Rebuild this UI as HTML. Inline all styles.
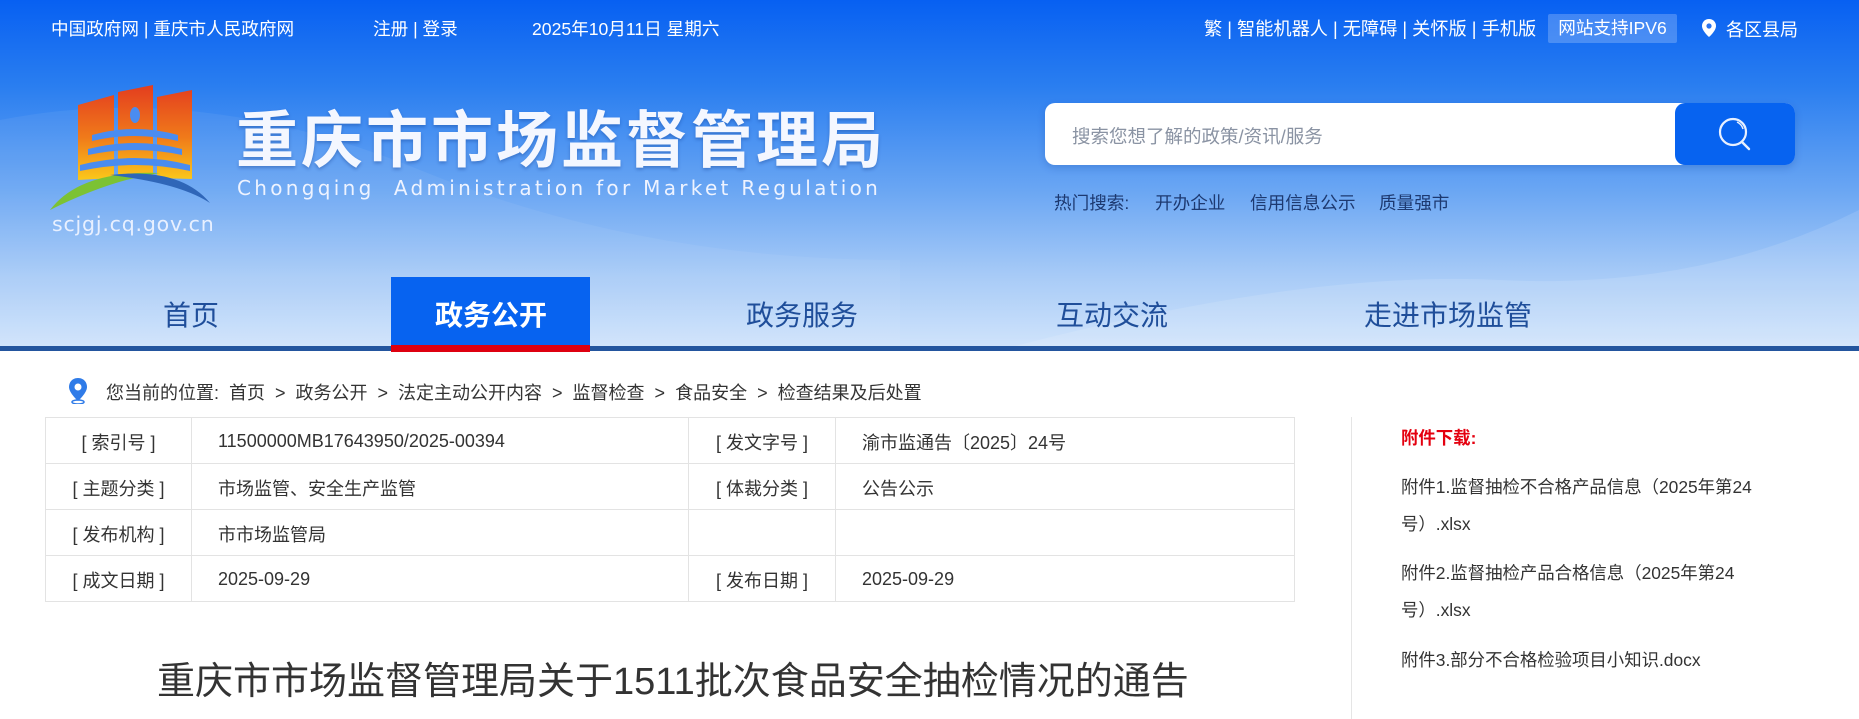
<!DOCTYPE html>
<html><head><meta charset="utf-8"><style>
*{margin:0;padding:0;box-sizing:border-box}
body{width:1859px;height:719px;overflow:hidden;background:#fff;font-family:"Liberation Sans","Noto Sans CJK SC",sans-serif;position:relative}
.hd{position:absolute;left:0;top:0;width:1859px;height:346px;background:linear-gradient(180deg,#0760f2 0%,#2a7ef0 25%,#6aa6f3 55%,#a8cbf7 80%,#cfe3fb 100%);overflow:hidden}
.a{position:absolute;white-space:nowrap}
.top{color:#fff;font-size:17.6px;top:16px}
.nav{font-size:28px;color:#1f4e9a;top:294px}
.tbl{position:absolute;left:45px;top:417px;width:1250px;border-collapse:collapse;font-size:18px;color:#333}
.tbl td{border:1px solid #e3e3e3;height:46px;padding:2px 0 0}
.tbl td.l{text-align:center}
.tbl td.v{padding-left:26px}
.r{font-size:17.4px;color:#333;left:1401px}
</style></head><body>
<div class="hd">
<svg class="a" style="left:0;top:60px" width="1859" height="290"><path d="M0 60 Q200 20 420 110 T900 200 L900 290 L0 290Z" fill="#fff" opacity=".06"/><path d="M1000 290 Q1300 210 1500 220 T1859 150 L1859 290Z" fill="#fff" opacity=".12"/></svg>
<div class="a top" style="left:51px">中国政府网 | 重庆市人民政府网</div>
<div class="a top" style="left:373px">注册 | 登录</div>
<div class="a top" style="left:532px">2025年10月11日 星期六</div>
<div class="a top" style="left:1204px;font-size:18.2px;top:15px">繁 | 智能机器人 | 无障碍 | 关怀版 | 手机版</div>
<div class="a" style="left:1548px;top:14px;width:129px;height:29px;background:rgba(255,255,255,.22);border-radius:2px;color:#fff;font-size:17.6px;line-height:29px;text-align:center">网站支持IPV6</div>
<svg class="a" style="left:1702px;top:19px" width="14" height="18" viewBox="0 0 14 18"><path d="M7 0C3 0 0 3 0 7c0 5 7 11 7 11s7-6 7-11c0-4-3-7-7-7z" fill="#fff"/><circle cx="7" cy="7" r="2.6" fill="#2a74ef"/></svg>
<div class="a top" style="left:1726px;font-size:18px">各区县局</div>
<svg class="a" style="left:50px;top:85px" width="165" height="125" viewBox="0 0 165 125">
<defs><linearGradient id="g" x1="0" y1="0" x2="0" y2="1"><stop offset="0" stop-color="#e33d1f"/><stop offset=".55" stop-color="#f07a1a"/><stop offset="1" stop-color="#fbc81a"/></linearGradient></defs>
<path d="M28 20 L64 10 L64 93 L28 95Z M68 7 L103 0 L103 92 L68 92Z M107 12 L142 5 L142 94 L107 93Z" fill="url(#g)"/>
<ellipse cx="85" cy="30" rx="5" ry="8" fill="#4a8cf0"/>
<path d="M42 50 Q85 38 128 50 L128 56 Q85 46 42 56Z M38 64 Q85 52 132 64 L132 70 Q85 60 38 70Z M30 80 Q85 66 140 80 L140 86 Q85 74 30 86Z" fill="#4a8cf0"/>
<path d="M0 125 Q30 85 110 88 Q60 95 0 125Z" fill="#7cc234"/>
<path d="M60 90 Q130 82 160 118 Q130 98 60 90Z" fill="#2f66b8"/>
</svg>
<div class="a" style="left:52px;top:212px;color:#e8f0ff;font-size:20.5px;letter-spacing:0.8px;font-family:'DejaVu Sans',sans-serif">scjgj.cq.gov.cn</div>
<div class="a" style="left:236px;top:90px;color:#f4f7ff;font-size:62px;font-weight:bold;letter-spacing:3px;text-shadow:0 2px 3px rgba(0,40,120,.3)">重庆市市场监督管理局</div>
<div class="a" style="left:237px;top:176px;color:#eef3ff;font-size:20px;letter-spacing:3.3px;font-family:'DejaVu Sans',sans-serif">Chongqing&nbsp; Administration for Market Regulation</div>
<div class="a" style="left:1045px;top:103px;width:750px;height:62px;background:#fff;border-radius:10px;box-shadow:0 3px 8px rgba(0,50,140,.2)"></div>
<div class="a" style="left:1072px;top:123px;color:#8a93a3;font-size:18.5px">搜索您想了解的政策/资讯/服务</div>
<div class="a" style="left:1675px;top:103px;width:120px;height:62px;background:#0763f0;border-radius:10px"></div>
<svg class="a" style="left:1718px;top:117px" width="34" height="34" viewBox="0 0 34 34"><circle cx="15" cy="15" r="13" fill="none" stroke="#e8f0ff" stroke-width="2.2"/><path d="M24 25 L31 32" stroke="#e8f0ff" stroke-width="2.4" stroke-linecap="round"/><path d="M19 5 A11 11 0 0 1 25 12" stroke="#e8f0ff" stroke-width="1.5" fill="none"/></svg>
<div class="a" style="left:1054px;top:190px;color:#1d3970;font-size:17.6px">热门搜索:</div>
<div class="a" style="left:1155px;top:190px;color:#1d3970;font-size:17.6px">开办企业</div>
<div class="a" style="left:1250px;top:190px;color:#1d3970;font-size:17.6px">信用信息公示</div>
<div class="a" style="left:1379px;top:190px;color:#1d3970;font-size:17.6px">质量强市</div>
<div class="a" style="left:391px;top:277px;width:199px;height:75px;background:#0763f0"></div>
<div class="a nav" style="left:163px">首页</div>
<div class="a nav" style="left:435px;color:#fff;font-weight:bold">政务公开</div>
<div class="a nav" style="left:746px">政务服务</div>
<div class="a nav" style="left:1056px">互动交流</div>
<div class="a nav" style="left:1364px">走进市场监管</div>
</div>
<div class="a" style="left:0;top:346px;width:1859px;height:5px;background:#23559e"></div>
<div class="a" style="left:391px;top:345px;width:199px;height:7px;background:#de0010"></div>
<svg class="a" style="left:68px;top:378px" width="20" height="26" viewBox="0 0 20 26"><path d="M10 0C4.5 0 1 4 1 9c0 6 9 14 9 14s9-8 9-14c0-5-3.5-9-9-9z" fill="#2f7be8"/><circle cx="10" cy="9" r="3.5" fill="#fff"/><ellipse cx="10" cy="24" rx="6" ry="2" fill="none" stroke="#2f7be8" stroke-width="1.5"/></svg>
<div class="a" style="left:106px;top:379px;font-size:18px;color:#333">您当前的位置:&nbsp; 首页 &nbsp;&gt;&nbsp; 政务公开 &nbsp;&gt;&nbsp; 法定主动公开内容 &nbsp;&gt;&nbsp; 监督检查 &nbsp;&gt;&nbsp; 食品安全 &nbsp;&gt;&nbsp; 检查结果及后处置</div>
<table class="tbl">
<tr><td class="l" style="width:146px">[ 索引号 ]</td><td class="v" style="width:497px">11500000MB17643950/2025-00394</td><td class="l" style="width:147px">[ 发文字号 ]</td><td class="v">渝市监通告〔2025〕24号</td></tr>
<tr><td class="l">[ 主题分类 ]</td><td class="v">市场监管、安全生产监管</td><td class="l">[ 体裁分类 ]</td><td class="v">公告公示</td></tr>
<tr><td class="l">[ 发布机构 ]</td><td class="v">市市场监管局</td><td class="l"></td><td class="v"></td></tr>
<tr><td class="l">[ 成文日期 ]</td><td class="v">2025-09-29</td><td class="l">[ 发布日期 ]</td><td class="v">2025-09-29</td></tr>
</table>
<div class="a" style="left:1351px;top:417px;width:1px;height:302px;background:#e5e5e5"></div>
<div class="a" style="left:1401px;top:425px;color:#e4000f;font-size:17.4px;font-weight:bold">附件下载:</div>
<div class="a r" style="top:474px">附件1.监督抽检不合格产品信息（2025年第24</div>
<div class="a r" style="top:511px">号）.xlsx</div>
<div class="a r" style="top:560px">附件2.监督抽检产品合格信息（2025年第24</div>
<div class="a r" style="top:597px">号）.xlsx</div>
<div class="a r" style="top:647px">附件3.部分不合格检验项目小知识.docx</div>
<div class="a" style="left:157px;top:650px;font-size:38px;color:#333">重庆市市场监督管理局关于1511批次食品安全抽检情况的通告</div>
</body></html>
